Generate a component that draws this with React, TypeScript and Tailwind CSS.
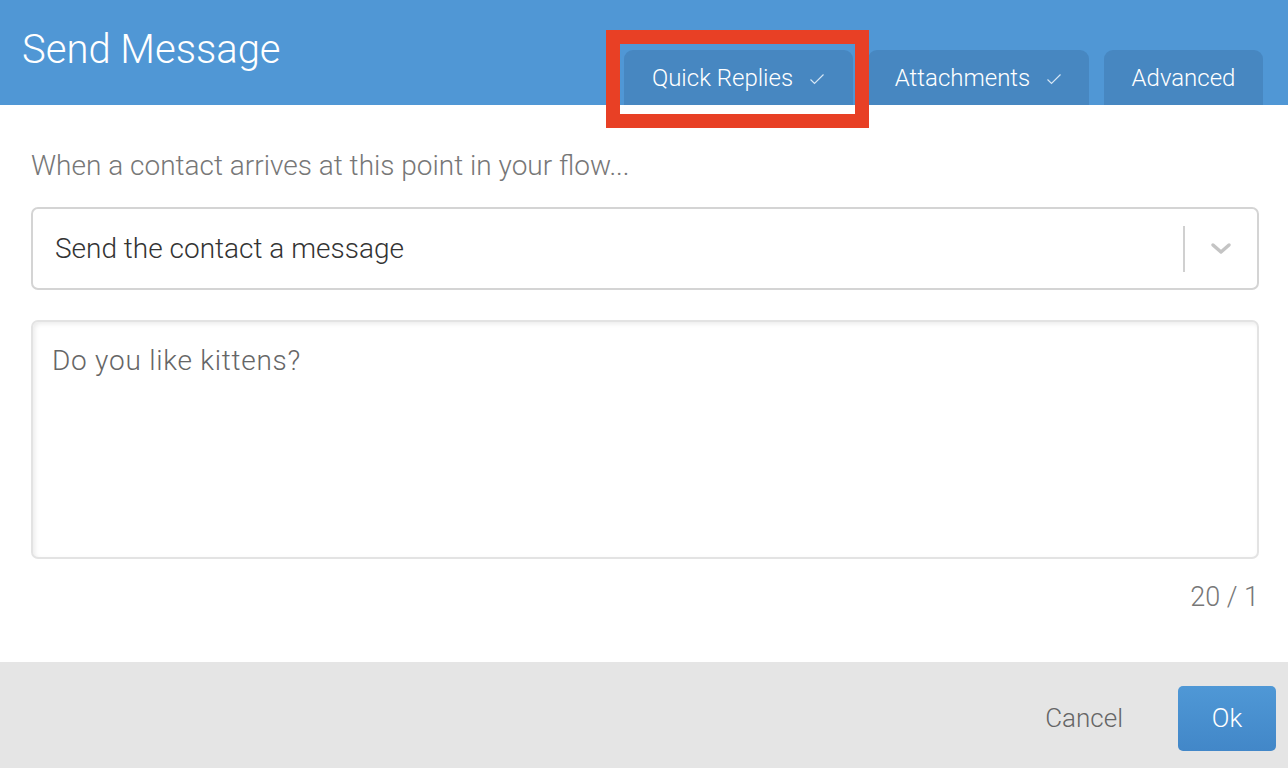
import React from "react";

function Check() {
  return (
    <svg width="16" height="14" viewBox="0 0 16 14" className="ml-[16px] mt-[2px]">
      <path d="M1.5 7.5 L5.5 11.5 L14.5 2.5" fill="none" stroke="#d6e6f5" strokeWidth="1.2" />
    </svg>
  );
}

function Tab({ label, check, width }: { label: string; check?: boolean; width: string }) {
  return (
    <div className={`${width} h-[55px] rounded-t-[9px] bg-[#4787c1] flex items-center justify-center text-white text-[24px] font-light`}>
      <span>{label}</span>
      {check && <Check />}
    </div>
  );
}

export default function App() {
  return (
    <div
      className="relative w-[1288px] h-[768px] bg-white flex flex-col overflow-hidden"
      style={{ fontFamily: "Roboto, 'Noto Sans', sans-serif" }}
    >
      <div className="h-[105px] bg-[#5097d5] flex justify-between items-end shrink-0">
        <div className="self-start pt-[26px] pl-[22px] text-white text-[40px] font-light leading-[48px]">Send Message</div>
        <div className="flex items-end gap-[15px] pr-[25px]">
          <Tab label="Quick Replies" check width="w-[229px]" />
          <Tab label="Attachments" check width="w-[221px]" />
          <Tab label="Advanced" width="w-[159px]" />
        </div>
      </div>

      <div className="flex-1 flex flex-col pl-[31px] pr-[29px] pt-[44px]">
        <div className="text-[28px] font-light text-[#777] leading-[34px]">
          When a contact arrives at this point in your flow...
        </div>

        <div className="mt-[24px] h-[83px] border-2 border-[#d4d4d4] rounded-[7px] flex items-center">
          <div className="flex-1 pl-[22px] text-[28px] text-[#333] font-light">Send the contact a message</div>
          <div className="w-[2px] h-[46px] bg-[#d0d0d0]" />
          <div className="w-[72px] flex items-center justify-center">
            <svg width="22" height="14" viewBox="0 0 22 14">
              <path d="M3 3 L11 10 L19 3" fill="none" stroke="#c4c4c4" strokeWidth="3.5" strokeLinecap="round" strokeLinejoin="round" />
            </svg>
          </div>
        </div>

        <div className="mt-[30px] h-[239px] border-2 border-[#e3e3e3] rounded-[7px] shadow-[inset_2px_2px_4px_rgba(0,0,0,0.08)] px-[19px] pt-[22px]">
          <div className="text-[28px] leading-[34px] text-[#666] font-light tracking-[0.75px]">Do you like kittens?</div>
        </div>

        <div className="mt-[21px] self-end text-[27px] leading-[34px] font-light text-[#777]">20 / 1</div>
      </div>

      <div className="h-[106px] bg-[#e5e5e5] shrink-0 flex items-start justify-end pt-[24px] pr-[12px] gap-[55px]">
        <div className="h-[65px] flex items-center text-[26px] text-[#666] font-light">Cancel</div>
        <div className="w-[98px] h-[65px] rounded-[5px] bg-gradient-to-b from-[#4f98d6] to-[#4287c8] flex items-center justify-center text-white text-[26px] font-light">
          Ok
        </div>
      </div>

      <div className="absolute left-[606px] top-[30px] w-[263px] h-[98px] border-[14px] border-[#e84025] pointer-events-none" />
    </div>
  );
}
